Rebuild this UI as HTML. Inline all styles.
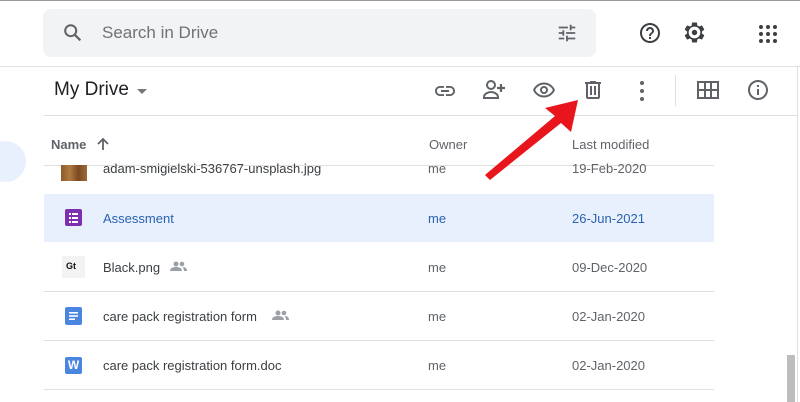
<!DOCTYPE html>
<html><head><style>
body{margin:0;width:800px;height:402px;overflow:hidden;background:#fff;font-family:"Liberation Sans",Arial,sans-serif;position:relative}
.a{position:absolute}
.t{color:#3c4043;font-size:13px}
.g{color:#5f6368;font-size:13px}
.sep{position:absolute;left:44px;width:670px;height:1px;background:#e0e0e0}
</style></head><body>
<div class="a" style="left:0;top:0;width:800px;height:1px;background:#999"></div>
<div class="a" style="left:43px;top:9px;width:553px;height:48px;background:#f1f3f4;border-radius:8px"></div>
<svg class="a" style="left:62px;top:22px" width="22" height="22" viewBox="0 0 24 24"><circle cx="9.5" cy="9.5" r="6" fill="none" stroke="#5f6368" stroke-width="2.2"/><path d="M14 14l6 6" stroke="#5f6368" stroke-width="2.4"/></svg>
<div class="a" style="left:102px;top:23px;font-size:17px;color:#6f7377">Search in Drive</div>
<svg class="a" style="left:556px;top:22px" width="22" height="22" viewBox="0 0 24 24" fill="#5f6368"><path d="M3 17v2h6v-2H3zM3 5v2h10V5H3zm10 16v-2h8v-2h-8v-2h-2v6h2zM7 9v2H3v2h4v2h2V9H7zm14 4v-2H11v2h10zm-6-4h2V7h4V5h-4V3h-2v6z"/></svg>
<svg class="a" style="left:638px;top:21px" width="24" height="24" viewBox="0 0 24 24" fill="#3c4043"><path d="M11 18h2v-2h-2v2zm1-16C6.48 2 2 6.480 2 12s4.48 10 10 10 10-4.48 10-10S17.52 2 12 2zm0 18c-4.41 0-8-3.59-8-8s3.59-8 8-8 8 3.59 8 8-3.59 8-8 8zm0-14c-2.21 0-4 1.79-4 4h2c0-1.1.9-2 2-2s2 .9 2 2c0 2-3 1.75-3 5h2c0-2.25 3-2.5 3-5 0-2.21-1.79-4-4-4z"/></svg>
<svg class="a" style="left:682px;top:20px" width="25" height="25" viewBox="0 0 24 24"><path fill="#3c4043" d="M19.14 12.94c.04-.3.06-.61.06-.94 0-.32-.02-.64-.07-.94l2.03-1.58c.18-.14.23-.41.12-.61l-1.92-3.32c-.12-.22-.37-.29-.59-.22l-2.39.96c-.5-.38-1.03-.7-1.62-.94l-.36-2.54c-.04-.24-.24-.41-.48-.41h-3.84c-.24 0-.43.17-.47.41l-.36 2.54c-.59.24-1.13.57-1.62.94l-2.39-.96c-.22-.08-.47 0-.59.22L2.74 8.87c-.12.21-.08.47.12.61l2.03 1.58c-.05.3-.09.63-.09.94s.02.64.07.94l-2.03 1.58c-.18.14-.23.41-.12.61l1.92 3.32c.12.22.37.29.59.22l2.39-.96c.5.38 1.03.7 1.62.94l.36 2.54c.05.24.24.41.48.41h3.840c.24 0 .44-.17.47-.41l.36-2.54c.59-.24 1.13-.56 1.62-.94l2.39.96c.22.08.47 0 .59-.22l1.92-3.32c.12-.22.07-.47-.12-.61l-2.01-1.58z"/><circle cx="12" cy="12" r="5.6" fill="#fff"/><circle cx="12" cy="12" r="2.6" fill="#3c4043"/></svg>
<svg class="a" style="left:758px;top:24px" width="20" height="20" viewBox="0 0 20 20" fill="#3c4043"><circle cx="3" cy="3" r="2"/><circle cx="10" cy="3" r="2"/><circle cx="17" cy="3" r="2"/><circle cx="3" cy="10" r="2"/><circle cx="10" cy="10" r="2"/><circle cx="17" cy="10" r="2"/><circle cx="3" cy="17" r="2"/><circle cx="10" cy="17" r="2"/><circle cx="17" cy="17" r="2"/></svg>
<div class="a" style="left:0;top:66px;width:800px;height:1px;background:#e0e0e0"></div>
<div class="a" style="left:797px;top:66px;width:1px;height:336px;background:#e0e0e0"></div>
<div class="a" style="left:54px;top:79px;font-size:19px;color:#202124">My Drive</div>
<div class="a" style="left:137px;top:89px;width:0;height:0;border-left:5px solid transparent;border-right:5px solid transparent;border-top:5px solid #777"></div>
<svg class="a" style="left:433px;top:79px" width="24" height="24" viewBox="0 0 24 24" fill="#5f6368"><path d="M3.9 12c0-1.71 1.39-3.1 3.1-3.1h4V7H7c-2.76 0-5 2.24-5 5s2.24 5 5 5h4v-1.9H7c-1.71 0-3.1-1.39-3.1-3.1zM8 13h8v-2H8v2zm9-6h-4v1.9h4c1.71 0 3.1 1.39 3.1 3.1s-1.39 3.1-3.1 3.1h-4V17h4c2.76 0 5-2.24 5-5s-2.24-5-5-5z"/></svg>
<svg class="a" style="left:482px;top:78px" width="26" height="24" viewBox="0 0 26 24" fill="none" stroke="#5f6368" stroke-width="2"><circle cx="9" cy="7" r="4"/><path d="M2 20v-1c0-3 4-5 7-5s7 2 7 5v1z"/><path d="M19 6v8M15 10h8" stroke-width="2.2"/></svg>
<svg class="a" style="left:531px;top:78px" width="26" height="24" viewBox="0 0 24 24" fill="#5f6368"><path d="M12 4.5C7 4.5 2.73 7.61 1 12c1.73 4.39 6 7.5 11 7.5s9.27-3.11 11-7.5c-1.73-4.39-6-7.5-11-7.5zm0 13c-3.79 0-7.17-2.13-8.82-5.5C4.83 8.63 8.21 6.5 12 6.5s7.17 2.13 8.82 5.5C19.17 15.37 15.79 17.5 12 17.5zM12 8a4 4 0 100 8 4 4 0 000-8zm0 6a2 2 0 110-4 2 2 0 010 4z"/></svg>
<svg class="a" style="left:581px;top:78px" width="24" height="24" viewBox="0 0 24 24" fill="#5f6368"><path d="M15 4V3H9v1H4v2h1v13c0 1.1.9 2 2 2h10c1.1 0 2-.9 2-2V6h1V4h-5zm2 15H7V6h10v13zM9 8h2v9H9zm4 0h2v9h-2z"/></svg>
<svg class="a" style="left:638px;top:80px" width="8" height="22" viewBox="0 0 8 22" fill="#5f6368"><circle cx="4" cy="3" r="2"/><circle cx="4" cy="11" r="2"/><circle cx="4" cy="19" r="2"/></svg>
<div class="a" style="left:675px;top:75px;width:1px;height:31px;background:#e0e0e0"></div>
<svg class="a" style="left:697px;top:81px" width="22" height="18" viewBox="0 0 22 18" fill="none" stroke="#5f6368" stroke-width="2"><rect x="1" y="1" width="20" height="16"/><path d="M1 9h20M8 1v16M14 1v16"/></svg>
<svg class="a" style="left:746px;top:78px" width="24" height="24" viewBox="0 0 24 24" fill="#5f6368"><path d="M11 7h2v2h-2zm0 4h2v6h-2zm1-9C6.48 2 2 6.48 2 12s4.48 10 10 10 10-4.48 10-10S17.52 2 12 2zm0 18c-4.41 0-8-3.59-8-8s3.59-8 8-8 8 3.59 8 8-3.59 8-8 8z"/></svg>
<div class="a" style="left:44px;top:115px;width:753px;height:1px;background:#e0e0e0"></div>
<div class="a" style="left:-15px;top:141px;width:41px;height:41px;border-radius:50%;background:#e8f0fe"></div>
<div class="a g" style="left:51px;top:137px;font-weight:bold;color:#5f6368">Name</div>
<svg class="a" style="left:96px;top:137px" width="14" height="14" viewBox="0 0 14 14"><path d="M7 13V2M2 7l5-5 5 5" fill="none" stroke="#5f6368" stroke-width="1.8"/></svg>
<div class="a g" style="left:429px;top:137px">Owner</div>
<div class="a g" style="left:572px;top:137px">Last modified</div>
<div class="sep" style="top:165px"></div>
<div class="a" style="left:61px;top:165px;width:26px;height:16px;background:linear-gradient(90deg,#8a5a2a,#b07a40,#7a4a20,#a06a35)"></div>
<div class="a t" style="left:103px;top:161px">adam-smigielski-536767-unsplash.jpg</div>
<div class="a g" style="left:428px;top:161px">me</div>
<div class="a g" style="left:572px;top:161px">19-Feb-2020</div>
<div class="a" style="left:44px;top:194px;width:670px;height:48px;background:#e8f0fe"></div>
<div class="a" style="left:65px;top:209px;width:17px;height:17px;border-radius:2px;background:#7e2fb0"></div>
<svg class="a" style="left:65px;top:209px" width="17" height="17"><g fill="#fff"><rect x="4" y="4" width="2" height="2"/><rect x="7" y="4" width="6" height="2"/><rect x="4" y="8" width="2" height="2"/><rect x="7" y="8" width="6" height="2"/><rect x="4" y="12" width="2" height="2"/><rect x="7" y="12" width="6" height="2"/></g></svg>
<div class="a" style="left:103px;top:211px;font-size:13px;color:#2a62b0">Assessment</div>
<div class="a" style="left:428px;top:211px;font-size:13px;color:#2a62b0">me</div>
<div class="a" style="left:572px;top:211px;font-size:13px;color:#2a62b0">26-Jun-2021</div>
<div class="a" style="left:62px;top:256px;width:23px;height:22px;background:#f3f3f3"></div>
<div class="a" style="left:66px;top:261px;font-size:9px;font-weight:bold;color:#111">Gt</div>
<div class="a t" style="left:103px;top:260px">Black.png</div>
<svg class="a" style="left:170px;top:261px" width="17" height="10" viewBox="0 0 17 10" fill="#9aa0a6"><circle cx="6" cy="3" r="2.5"/><circle cx="12" cy="3" r="2.3"/><path d="M0 10c0-3 3-4 6-4s6 1 6 4zM13 6c2 0 4 1 4 4h-3c0-2-1-3-1-4z"/></svg>
<div class="a g" style="left:428px;top:260px">me</div>
<div class="a g" style="left:572px;top:260px">09-Dec-2020</div>
<div class="sep" style="top:291px"></div>
<div class="a" style="left:65px;top:307px;width:17px;height:18px;border-radius:2px;background:#4a86e0"></div>
<svg class="a" style="left:65px;top:307px" width="17" height="18"><g fill="#fff"><rect x="4" y="5" width="9" height="1.6"/><rect x="4" y="8.2" width="9" height="1.6"/><rect x="4" y="11.4" width="6" height="1.6"/></g></svg>
<div class="a t" style="left:103px;top:309px">care pack registration form</div>
<svg class="a" style="left:272px;top:310px" width="17" height="10" viewBox="0 0 17 10" fill="#9aa0a6"><circle cx="6" cy="3" r="2.5"/><circle cx="12" cy="3" r="2.3"/><path d="M0 10c0-3 3-4 6-4s6 1 6 4zM13 6c2 0 4 1 4 4h-3c0-2-1-3-1-4z"/></svg>
<div class="a g" style="left:428px;top:309px">me</div>
<div class="a g" style="left:572px;top:309px">02-Jan-2020</div>
<div class="sep" style="top:340px"></div>
<div class="a" style="left:65px;top:357px;width:17px;height:17px;border-radius:2px;background:#4a86e0;color:#fff;font-size:12px;font-weight:bold;text-align:center;line-height:17px">W</div>
<div class="a t" style="left:103px;top:358px">care pack registration form.doc</div>
<div class="a g" style="left:428px;top:358px">me</div>
<div class="a g" style="left:572px;top:358px">02-Jan-2020</div>
<div class="sep" style="top:389px"></div>
<div class="a" style="left:787px;top:355px;width:8px;height:47px;background:#bdbdbd"></div>
<svg class="a" style="left:0;top:0" width="800" height="402"><polygon points="578,100 571,132 561,123 490,180 485,175 555,116 545,108" fill="#e8161c"/></svg>
</body></html>
